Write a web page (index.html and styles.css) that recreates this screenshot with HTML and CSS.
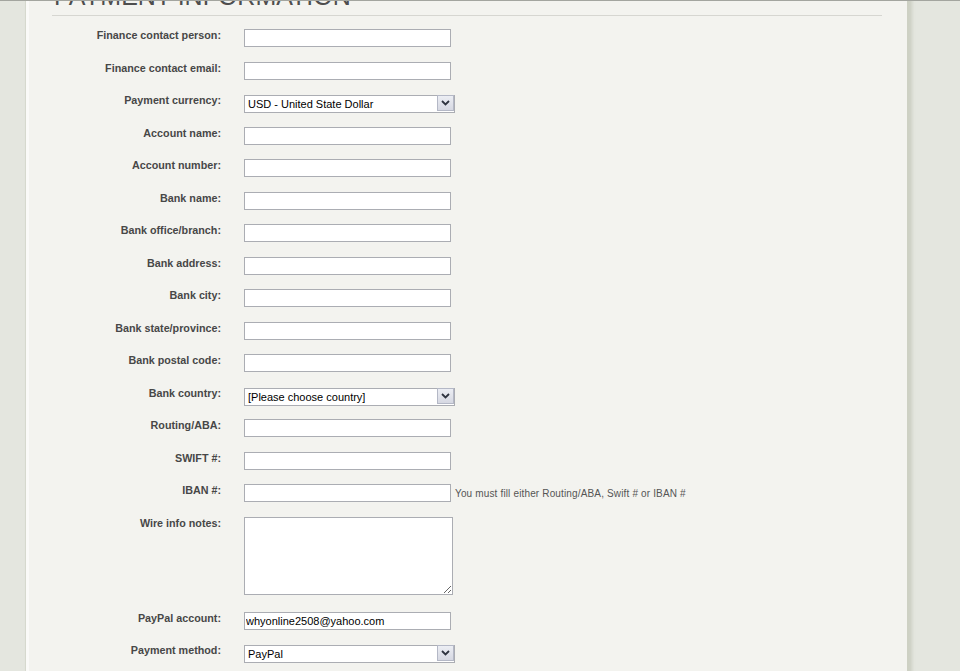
FILE: index.html
```html
<!DOCTYPE html>
<html>
<head>
<meta charset="utf-8">
<title>Payment information</title>
<link rel="stylesheet" href="styles.css">
</head>
<body>
<div class="page">
  <div class="content">
    <h2 class="heading">PAYMENT INFORMATION</h2>
    <form class="form">
      <div class="row"><label class="lbl">Finance contact person:</label><input class="txt" type="text"></div>
      <div class="row"><label class="lbl">Finance contact email:</label><input class="txt" type="text"></div>
      <div class="row"><label class="lbl">Payment currency:</label>
        <div class="sel-wrap"><select class="sel"><option>USD - United State Dollar</option></select><span class="sel-btn"><svg width="9" height="6" viewBox="0 0 9 6"><path d="M1 1 L4.5 4.5 L8 1" fill="none" stroke="#2f3440" stroke-width="1.8"/></svg></span></div>
      </div>
      <div class="row"><label class="lbl">Account name:</label><input class="txt" type="text"></div>
      <div class="row"><label class="lbl">Account number:</label><input class="txt" type="text"></div>
      <div class="row"><label class="lbl">Bank name:</label><input class="txt" type="text"></div>
      <div class="row"><label class="lbl">Bank office/branch:</label><input class="txt" type="text"></div>
      <div class="row"><label class="lbl">Bank address:</label><input class="txt" type="text"></div>
      <div class="row"><label class="lbl">Bank city:</label><input class="txt" type="text"></div>
      <div class="row"><label class="lbl">Bank state/province:</label><input class="txt" type="text"></div>
      <div class="row"><label class="lbl">Bank postal code:</label><input class="txt" type="text"></div>
      <div class="row"><label class="lbl">Bank country:</label>
        <div class="sel-wrap"><select class="sel"><option>[Please choose country]</option></select><span class="sel-btn"><svg width="9" height="6" viewBox="0 0 9 6"><path d="M1 1 L4.5 4.5 L8 1" fill="none" stroke="#2f3440" stroke-width="1.8"/></svg></span></div>
      </div>
      <div class="row"><label class="lbl">Routing/ABA:</label><input class="txt" type="text"></div>
      <div class="row"><label class="lbl">SWIFT #:</label><input class="txt" type="text"></div>
      <div class="row"><label class="lbl">IBAN #:</label><input class="txt" type="text"><span class="hint">You must fill either Routing/ABA, Swift # or IBAN #</span></div>
      <div class="row row-tall"><label class="lbl">Wire info notes:</label><textarea class="area"></textarea></div>
      <div class="row"><label class="lbl">PayPal account:</label><input class="txt" type="text" value="whyonline2508@yahoo.com"></div>
      <div class="row"><label class="lbl">Payment method:</label>
        <div class="sel-wrap"><select class="sel"><option>PayPal</option></select><span class="sel-btn"><svg width="9" height="6" viewBox="0 0 9 6"><path d="M1 1 L4.5 4.5 L8 1" fill="none" stroke="#2f3440" stroke-width="1.8"/></svg></span></div>
      </div>
    </form>
  </div>
</div>
</body>
</html>
```
FILE: styles.css
```css
html, body {
  margin: 0;
  padding: 0;
  height: 100%;
  overflow: hidden;
}
body {
  background: #e4e6df;
  font-family: "Liberation Sans", Arial, sans-serif;
  border-top: 1px solid #a3a59f;
  box-sizing: border-box;
}
.page {
  margin-left: 25px;
  width: 881px;
  min-height: 100%;
  background: #f3f3ef;
  border-left: 1px solid #d6d9ce;
  border-right: 2px solid #cdd0c3;
  box-shadow: inset 3px 0 0 #fafaf8, 3px 0 3px rgba(160, 165, 145, 0.35);
}
.content {
  padding: 0 25px 0 26px;
}
.heading {
  margin: -18px 0 0 2px;
  font-size: 25px;
  line-height: 26px;
  font-weight: normal;
  color: #4e4e4e;
  height: 26px;
}
.form {
  border-top: 1px solid #d6d6d1;
  box-shadow: 0 1px 0 #fbfbf9;
  margin-top: 6px;
  padding-top: 13px;
}
.row {
  display: flex;
  align-items: flex-start;
  height: 32.5px;
}
.row-tall {
  height: 95px;
}
.lbl {
  width: 169px;
  margin-right: 23px;
  text-align: right;
  font-size: 10.75px;
  line-height: 13px;
  font-weight: bold;
  color: #474747;
  padding-top: 0;
}
.txt {
  box-sizing: border-box;
  width: 207px;
  height: 18px;
  margin: 0;
  padding: 0 1px;
  border: 1px solid #abadb3;
  background: #fff;
  font-family: "Liberation Sans", Arial, sans-serif;
  font-size: 11px;
  color: #000;
  outline: none;
}
.sel-wrap {
  position: relative;
  width: 211px;
  height: 18px;
}
.sel {
  -webkit-appearance: none;
  appearance: none;
  box-sizing: border-box;
  width: 211px;
  height: 18px;
  margin: 0;
  padding: 0 0 0 3px;
  border: 1px solid #abadb3;
  border-radius: 0;
  background: #fff;
  font-family: "Liberation Sans", Arial, sans-serif;
  font-size: 11px;
  color: #000;
}
.sel-btn {
  position: absolute;
  right: 1px;
  top: 1px;
  width: 15px;
  height: 14px;
  border: 1px solid #b4b8c6;
  background: linear-gradient(#eceef4, #d6d8e2);
  display: flex;
  align-items: center;
  justify-content: center;
}
.hint {
  margin-left: 4px;
  padding-top: 4px;
  font-size: 10px;
  line-height: 12px;
  color: #555;
  letter-spacing: 0.15px;
}
.area {
  box-sizing: border-box;
  width: 209px;
  height: 78px;
  margin: 0;
  border: 1px solid #abadb3;
  background: #fff;
  font-family: "Liberation Sans", Arial, sans-serif;
  font-size: 11px;
}
```
